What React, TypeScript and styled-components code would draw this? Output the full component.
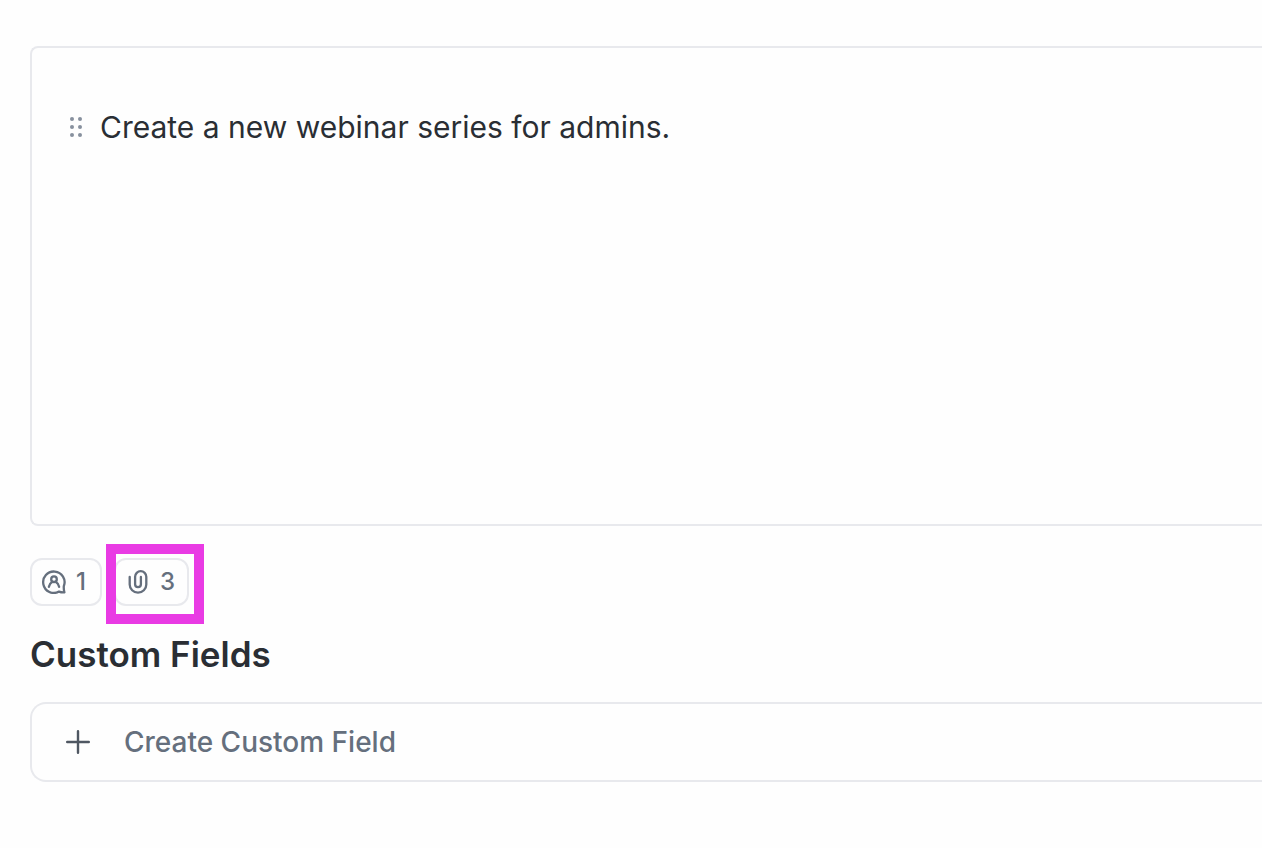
import React from "react";
import styled, { createGlobalStyle } from "styled-components";

const GlobalStyle = createGlobalStyle`
  *, *::before, *::after { box-sizing: border-box; }
  body {
    margin: 0;
    background: #fefefe;
    color: #2a2e34;
    font-family: Inter, "Liberation Sans", sans-serif;
    -webkit-font-smoothing: antialiased;
    overflow-x: hidden;
  }
`;

const Page = styled.main`
  display: flex;
  flex-direction: column;
  padding: 46px 0 64px 30px;
`;

const Editor = styled.section`
  min-height: 480px;
  padding: 56px 38px;
  border: 2px solid #e8e9ed;
  border-right: 0;
  border-radius: 8px 0 0 8px;
`;

const Block = styled.div`
  display: flex;
  align-items: center;
  gap: 18px;
`;

const DragHandle = styled.button`
  display: flex;
  padding: 0;
  border: 0;
  background: none;
  color: #87909e;
  cursor: grab;
`;

const BlockText = styled.p`
  margin: 0;
  font-size: 30px;
  line-height: 46px;
  outline: none;
`;

const Badges = styled.div`
  display: flex;
  gap: 12px;
  margin-top: 32px;
`;

const BadgeSlot = styled.div`
  position: relative;
`;

const Badge = styled.button`
  display: flex;
  align-items: center;
  gap: 10px;
  min-width: 72px;
  height: 48px;
  padding: 0 12px 0 10px;
  border: 2px solid #e8e9ed;
  border-radius: 12px;
  background: none;
  color: #656f7d;
  font: inherit;
  font-size: 24px;
  font-weight: 500;
  line-height: 32px;
  cursor: pointer;
`;

const Highlight = styled.div`
  position: absolute;
  inset: -14px -15px -18px -8px;
  border: 10px solid #e93be4;
  pointer-events: none;
`;

const Heading = styled.h2`
  margin: 24px 0;
  font-size: 35px;
  font-weight: 600;
  line-height: 48px;
`;

const CreateField = styled.button`
  display: flex;
  align-items: center;
  gap: 34px;
  height: 80px;
  padding: 0 34px;
  border: 2px solid #e8e9ed;
  border-right: 0;
  border-radius: 16px 0 0 16px;
  background: none;
  color: #656f7d;
  font: inherit;
  font-size: 28px;
  font-weight: 500;
  line-height: 40px;
  cursor: pointer;
`;

const DragIcon = () => (
  <svg width="12" height="20" viewBox="0 0 12 20" fill="currentColor" aria-hidden="true">
    {[2, 10].map((x) => [2, 10, 18].map((y) => <circle key={`${x}-${y}`} cx={x} cy={y} r="2" />))}
  </svg>
);

const CommentIcon = () => (
  <svg width="24" height="24" viewBox="0 0 24 24" fill="none" stroke="currentColor" strokeWidth="2.3" strokeLinecap="round" strokeLinejoin="round" aria-hidden="true">
    <path d="M17 21.6A10.7 10.7 0 1 1 21.8 16.2Q21.6 19.5 22.4 22.4Q19.5 22.6 17 21.6Z" />
    <circle cx="12" cy="9.2" r="2.8" />
    <path d="M6.9 16.8C7.4 14.2 8.7 12.8 10.4 11.8M13.6 11.8C15.3 12.8 16.6 14.2 17.1 16.8" />
  </svg>
);

const ClipIcon = () => (
  <svg width="24" height="24" viewBox="0 0 24 24" fill="none" stroke="currentColor" strokeWidth="2.3" strokeLinecap="round" strokeLinejoin="round" aria-hidden="true">
    <path d="M3.7 7V14.4A8.3 8.3 0 0 0 20.3 14.4V6.8A5.6 5.6 0 0 0 9.1 6.8V14.2A2.9 2.9 0 0 0 14.9 14.2V7" />
  </svg>
);

const PlusIcon = () => (
  <svg width="24" height="24" viewBox="0 0 24 24" fill="none" stroke="#4f5762" strokeWidth="2.4" strokeLinecap="round" aria-hidden="true">
    <path d="M12 1.2V22.8M1.2 12H22.8" />
  </svg>
);

export default function App() {
  return (
    <>
      <GlobalStyle />
      <Page>
        <Editor aria-label="Description">
          <Block>
            <DragHandle type="button" aria-label="Drag block">
              <DragIcon />
            </DragHandle>
            <BlockText role="textbox" contentEditable suppressContentEditableWarning spellCheck={false}>
              Create a new webinar series for admins.
            </BlockText>
          </Block>
        </Editor>
        <Badges>
          <Badge type="button" aria-label="1 assigned comment">
            <CommentIcon />1
          </Badge>
          <BadgeSlot>
            <Badge type="button" aria-label="3 attachments">
              <ClipIcon />3
            </Badge>
            <Highlight />
          </BadgeSlot>
        </Badges>
        <Heading>Custom Fields</Heading>
        <CreateField type="button">
          <PlusIcon />
          Create Custom Field
        </CreateField>
      </Page>
    </>
  );
}
